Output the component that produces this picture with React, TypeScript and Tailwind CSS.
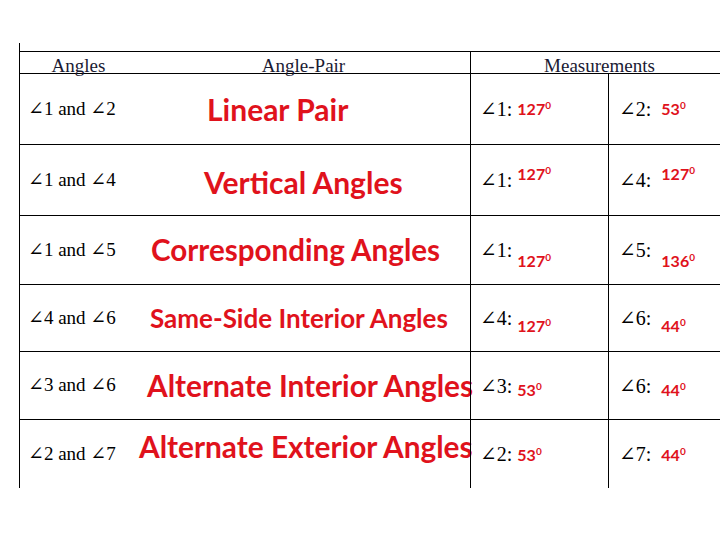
const serif = "font-['Liberation_Serif','DejaVu_Serif',serif]";
const red = "font-['Lato','Open_Sans',sans-serif] font-bold text-[#e0121c]";

type Row = {
  pair: [string, string];
  name: string;
  nameClass: string;
  a: [string, string];
  b: [string, string];
  rowClass: string;
  valA: string;
  valB: string;
};

const rows: Row[] = [
  {
    pair: ["1", "2"],
    name: "Linear Pair",
    nameClass: "pl-[70px] text-[30px]",
    a: ["1", "127"],
    b: ["2", "53"],
    rowClass: "h-[71px] border-b",
    valA: "",
    valB: "",
  },
  {
    pair: ["1", "4"],
    name: "Vertical Angles",
    nameClass: "pl-[67px] text-[30px] mt-[4px]",
    a: ["1", "127"],
    b: ["4", "127"],
    rowClass: "h-[71px] border-b",
    valA: "mb-[12px]",
    valB: "mb-[12px]",
  },
  {
    pair: ["1", "5"],
    name: "Corresponding Angles",
    nameClass: "pl-[14px] text-[29.6px]",
    a: ["1", "127"],
    b: ["5", "136"],
    rowClass: "h-[69px] border-b",
    valA: "mt-[22px]",
    valB: "mt-[22px]",
  },
  {
    pair: ["4", "6"],
    name: "Same-Side Interior Angles",
    nameClass: "pl-[13px] text-[26px]",
    a: ["4", "127"],
    b: ["6", "44"],
    rowClass: "h-[67px] border-b",
    valA: "mt-[16px]",
    valB: "mt-[16px]",
  },
  {
    pair: ["3", "6"],
    name: "Alternate Interior Angles",
    nameClass: "pl-[10px] text-[29.8px]",
    a: ["3", "53"],
    b: ["6", "44"],
    rowClass: "h-[68px] border-b",
    valA: "mt-[8px]",
    valB: "mt-[8px]",
  },
  {
    pair: ["2", "7"],
    name: "Alternate Exterior Angles",
    nameClass: "pl-[2px] text-[29.8px] mb-[14px]",
    a: ["2", "53"],
    b: ["7", "44"],
    rowClass: "h-[68px]",
    valA: "mt-[2px]",
    valB: "mt-[2px]",
  },
];

function Measure({ angle, value, shift, valuePad }: { angle: string; value: string; shift: string; valuePad: string }) {
  return (
    <div className="flex items-center whitespace-nowrap">
      <span className={`${serif} text-[20px] text-black`}>∠{angle}:</span>
      <span className={`${red} text-[16px] text-[#c8141e] ${valuePad} ${shift}`}>
        {value}
        <sup className="text-[10px] -top-[6px]">0</sup>
      </span>
    </div>
  );
}

export default function App() {
  return (
    <div className="w-[720px] h-[540px] overflow-hidden bg-white">
      <div className="ml-[19px] mt-[43px] w-[712px] border-l border-black">
        <div className="h-[8px]" />
        <div className="border-t border-black">
          <div className="grid h-[22px] grid-cols-[117px_333px_258px] border-b border-black">
            <div className={`${serif} flex items-center justify-center text-[19px] text-[#1a1a33]`}>Angles</div>
            <div className={`${serif} flex items-center justify-center text-[19px] text-[#1a1a33]`}>Angle-Pair</div>
            <div className={`${serif} flex items-center justify-center border-l border-black text-[19px] text-[#1a1a33]`}>
              Measurements
            </div>
          </div>
          {rows.map((r) => (
            <div key={r.name} className={`grid grid-cols-[117px_333px_138px_120px] border-black ${r.rowClass}`}>
              <div className={`${serif} flex items-center pl-[8px] text-[19px] text-black whitespace-nowrap`}>
                ∠{r.pair[0]} and ∠{r.pair[1]}
              </div>
              <div className="flex items-center overflow-visible">
                <span className={`${red} ${r.nameClass} whitespace-nowrap leading-none`}>{r.name}</span>
              </div>
              <div className="flex items-center border-l border-black pl-[9px]">
                <Measure angle={r.a[0]} value={r.a[1]} shift={r.valA} valuePad="ml-[5px]" />
              </div>
              <div className="flex items-center border-l border-black pl-[10px]">
                <Measure angle={r.b[0]} value={r.b[1]} shift={r.valB} valuePad="ml-[10px]" />
              </div>
            </div>
          ))}
        </div>
      </div>
    </div>
  );
}
